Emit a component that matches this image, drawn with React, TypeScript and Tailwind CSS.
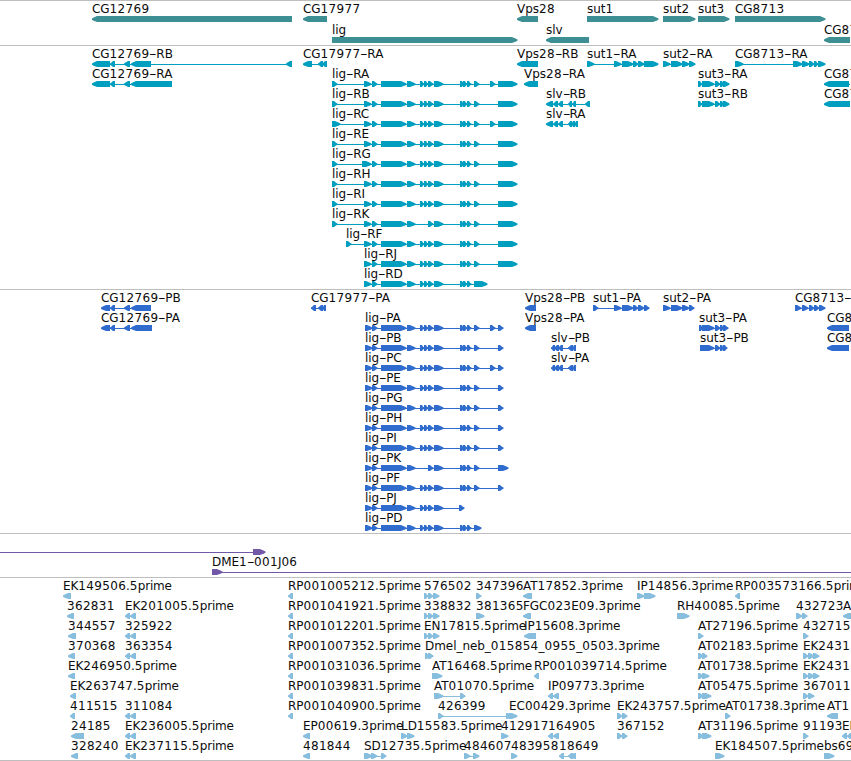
import React from "react";

type Dir = "R" | "L";
type Exon = [number, number];
interface Feature {
  name: string;
  dir: Dir;
  exons: Exon[];
  line?: Exon;
}
type Row = Feature[];

const f = (name: string, dir: Dir, ...exons: Exon[]): Feature => ({ name, dir, exons });

const genes: Row[] = [
  [
    f("CG12769", "L", [92, 292]),
    f("CG17977", "L", [303, 327]),
    f("Vps28", "L", [517, 538]),
    f("sut1", "R", [587, 658]),
    f("sut2", "R", [663, 695]),
    f("sut3", "R", [698, 729]),
    f("CG8713", "R", [735, 825]),
  ],
  [
    f("lig", "R", [332, 517]),
    f("slv", "L", [546, 589]),
    f("CG87", "L", [824, 850]),
  ],
];

const head: Exon[] = [[364, 371], [372, 377], [381, 406], [407, 415]];
const trio: Exon[] = [[420, 424], [424, 428], [428, 433]];
const mid: Exon[] = [[434, 443], [460, 464], [463, 467], [467, 471]];
const end: Exon = [498, 517];
const ligR = (name: string, ...first: Exon[]) =>
  f(name, "R", ...first, ...head, ...trio, ...mid, [474, 479], end);
const slvStart: Exon[] = [[546, 553], [553, 558], [558, 563], [568, 572]];
const sut3: Exon[] = [[698, 702], [702, 714], [715, 720], [720, 724], [723, 729]];

const transcripts: Row[] = [
  [
    f("CG12769-RB", "L", [92, 110], [110, 115], [124, 130], [131, 151], [286, 292]),
    f("CG17977-RA", "L", [303, 312], [318, 323], [322, 327]),
    f("Vps28-RB", "L", [517, 538]),
    f("sut1-RA", "R", [587, 594], [614, 621], [622, 633], [633, 638], [638, 644], [644, 658]),
    f("sut2-RA", "R", [663, 670], [671, 682], [682, 689], [689, 695]),
    f("CG8713-RA", "R", [735, 743], [793, 802], [802, 809], [809, 814], [814, 818], [818, 825]),
  ],
  [
    f("CG12769-RA", "L", [92, 110], [110, 115], [124, 130], [131, 172]),
    f("lig-RA", "R", [332, 337], ...head, ...trio, ...mid, [474, 479], [490, 495], end),
    f("Vps28-RA", "L", [524, 538]),
    f("sut3-RA", "R", ...sut3),
    { name: "CG87", dir: "L", exons: [[824, 849]], line: [824, 850] },
  ],
  [
    ligR("lig-RB", [332, 337]),
    f("slv-RB", "L", ...slvStart, [572, 576], [585, 590]),
    f("sut3-RB", "R", ...sut3),
    f("CG87", "L", [824, 850]),
  ],
  [
    f("lig-RC", "R", [332, 340], ...head, ...trio, ...mid, [474, 479], [490, 495], end),
    f("slv-RA", "L", ...slvStart, [571, 575], [574, 578]),
  ],
  [ligR("lig-RE", [332, 337])],
  [ligR("lig-RG", [332, 337], [362, 367])],
  [ligR("lig-RH", [332, 337])],
  [ligR("lig-RI", [332, 337])],
  [f("lig-RK", "R", [332, 337], ...head, [428, 433], ...mid, [474, 479], end)],
  [ligR("lig-RF", [346, 351])],
  [ligR("lig-RJ")],
  [f("lig-RD", "R", ...head, ...trio, ...mid, [474, 487])],
];

const cdsHead: Exon[] = [[365, 372], [372, 377], [381, 406], [407, 415]];
const ligP = (name: string, ...tail: Exon[]) =>
  f(name, "R", ...cdsHead, ...trio, ...mid, ...tail);
const slvP: Exon[] = [[551, 555], [554, 559], [558, 563], [568, 573], [572, 576]];

const proteins: Row[] = [
  [
    f("CG12769-PB", "L", [101, 110], [110, 115], [124, 130], [131, 151]),
    f("CG17977-PA", "L", [311, 316], [318, 323], [322, 326]),
    f("Vps28-PB", "L", [525, 536]),
    f("sut1-PA", "R", [593, 598], [614, 621], [622, 633], [633, 638], [638, 644], [644, 649]),
    f("sut2-PA", "R", [663, 670], [671, 682], [682, 689], [689, 694]),
    f("CG8713-", "R", [795, 801], [802, 808], [809, 814], [814, 819], [819, 825]),
  ],
  [
    f("CG12769-PA", "L", [101, 110], [110, 115], [124, 130], [131, 152]),
    ligP("lig-PA", [474, 479], [490, 495], [498, 503]),
    f("Vps28-PA", "L", [525, 536]),
    f("sut3-PA", "R", [699, 703], [702, 714], [715, 720], [720, 724], [723, 728]),
    f("CG8", "L", [827, 849]),
  ],
  [
    ligP("lig-PB", [474, 479], [498, 503]),
    f("slv-PB", "L", ...slvP),
    f("sut3-PB", "R", [700, 703], [702, 714], [715, 720], [720, 724], [723, 727]),
    f("CG8", "L", [827, 849]),
  ],
  [ligP("lig-PC", [474, 479], [490, 495], [498, 503]), f("slv-PA", "L", ...slvP)],
  [ligP("lig-PE", [474, 479], [498, 503])],
  [ligP("lig-PG", [474, 479], [498, 503])],
  [ligP("lig-PH", [474, 479], [498, 503])],
  [ligP("lig-PI", [474, 479], [498, 503])],
  [f("lig-PK", "R", ...cdsHead, [428, 433], ...mid, [474, 479], [498, 508])],
  [ligP("lig-PF", [474, 479], [498, 503])],
  [f("lig-PJ", "R", ...cdsHead, ...trio, [434, 443], [459, 464])],
  [ligP("lig-PD", [474, 481])],
];

const bacs: Row[] = [
  [{ name: "", dir: "R", exons: [[253, 265]], line: [0, 265] }],
  [{ name: "DME1-001J06", dir: "R", exons: [[212, 222]], line: [212, 851] }],
];

const pair: Exon[] = [[125, 130], [130, 136]];
const rp: Exon = [288, 293];
const triple: Exon[] = [[424, 428], [428, 433], [433, 439]];
const ek: Exon[] = [[803, 808], [808, 814], [813, 819]];

const ests: Row[] = [
  [
    f("EK149506.5prime", "L", [63, 71]),
    f("RP001005212.5prime", "L", rp),
    f("576502", "R", ...triple),
    f("347396", "R", [476, 481]),
    f("AT17852.3prime", "L", [523, 532]),
    f("IP14856.3prime", "R", [637, 644], [644, 655]),
    f("RP003573166.5prime", "L", [735, 740]),
  ],
  [
    f("362831", "L", [67, 74]),
    f("EK201005.5prime", "L", ...pair),
    f("RP001041921.5prime", "L", rp),
    f("338832", "R", ...triple),
    f("381365", "R", [476, 484]),
    f("FGC023E09.3prime", "L", [523, 531]),
    f("RH40085.5prime", "R", [677, 689]),
    f("432723", "R", [796, 802], [802, 807]),
    f("A", "L", [843, 852]),
  ],
  [
    f("344557", "L", [68, 76]),
    f("325922", "L", ...pair),
    f("RP001012201.5prime", "L", rp),
    f("EN17815.5prime", "R", ...triple),
    f("IP15608.3prime", "L", [524, 536]),
    f("AT27196.5prime", "R", [698, 703]),
    f("432715", "R", [803, 808]),
  ],
  [
    f("370368", "L", [68, 75]),
    f("363354", "L", ...pair),
    f("RP001007352.5prime", "L", rp),
    f("Dmel_neb_015854_0955_0503.3prime", "R", [425, 429], [428, 433]),
    f("AT02183.5prime", "R", [698, 703], [702, 707]),
    f("EK2431", "R", ...ek),
  ],
  [
    f("EK246950.5prime", "L", [68, 75]),
    f("RP001031036.5prime", "L", rp),
    f("AT16468.5prime", "R", [432, 442]),
    f("RP001039714.5prime", "L", [534, 539]),
    f("AT01738.5prime", "R", [698, 703], [702, 709]),
    f("EK2431", "R", ...ek),
  ],
  [
    f("EK263747.5prime", "L", [70, 76]),
    f("RP001039831.5prime", "L", rp),
    f("AT01070.5prime", "R", [434, 443], [460, 465]),
    f("IP09773.3prime", "L", [548, 553], [553, 559]),
    f("AT05475.5prime", "R", [698, 703], [702, 711]),
    f("367011", "R", [803, 808], [808, 814]),
  ],
  [
    f("411515", "L", [70, 75]),
    f("311084", "L", ...pair),
    f("RP001040900.5prime", "L", rp),
    f("426399", "R", [438, 443], [506, 511]),
    f("EC00429.3prime", "R", [509, 517]),
    f("EK243757.5prime", "R", [617, 622], [622, 627]),
    f("AT01738.3prime", "R", [725, 730]),
    f("AT1", "L", [827, 838]),
  ],
  [
    f("24185", "L", [71, 84]),
    f("EK236005.5prime", "L", ...pair),
    f("EP00619.3prime", "L", [303, 310]),
    f("LD15583.5prime", "R", [401, 407], [407, 414]),
    f("412917", "R", [501, 508]),
    f("164905", "L", [548, 553], [553, 559]),
    f("367152", "R", [617, 622], [622, 627]),
    f("AT31196.5prime", "R", [698, 703], [702, 711]),
    f("91193", "R", [803, 808]),
    f("EK", "L", [842, 847], [847, 852]),
  ],
  [
    f("328240", "L", [71, 78]),
    f("EK237115.5prime", "L", ...pair),
    f("481844", "L", [303, 310]),
    f("SD12735.5prime", "R", [364, 372], [371, 377], [381, 386]),
    f("484607", "R", [464, 470], [473, 479]),
    f("483958", "R", [511, 517]),
    f("18649", "L", [559, 564], [568, 573], [571, 576]),
    f("EK184507.5prime", "R", [715, 724]),
    f("bs69", "R", [824, 834]),
  ],
];

// Exon outline: a full-height block that rounds off to a point on its leading side.
function exonPoints([a, b]: Exon, dir: Dir, x0: number) {
  const tip = Math.min(b - a - 2, 5);
  const s = a - x0;
  const e = b - x0;
  if (dir === "R") {
    return `${s},0 ${e - tip},0 ${e - 1},1.7 ${e + 0.5},2.5 ${e + 0.5},3.8 ${e - 1},4.5 ${e - tip},6 ${s},6`;
  }
  return `${e},0 ${s + tip},0 ${s + 1.2},1.7 ${s},2.5 ${s},3.8 ${s + 1.2},4.5 ${s + tip},6 ${e},6`;
}

// Digits are set on an 8px pitch and the hyphen is drawn wide.
function Label({ text }: { text: string }) {
  return (
    <span className="relative -top-px block whitespace-pre text-[12px] leading-[14px] text-[#0c0c0c]">
      {text.split(/(\d+|-|[a-z]{4,})/).filter(Boolean).map((run, i) => {
        if (run === "-") {
          return <span key={i} className="inline-block w-[7px] origin-left scale-x-175 leading-[12px]">-</span>;
        }
        if (/[a-z]{4}/.test(run)) {
          return <span key={i} className="tracking-[-0.2px]">{run}</span>;
        }
        return <span key={i} className={/\d/.test(run) ? "tracking-[0.32px]" : "tracking-[-0.05px]"}>{run}</span>;
      })}
    </span>
  );
}

function Glyph({ feature }: { feature: Feature }) {
  const first = feature.exons[0][0];
  const last = feature.exons[feature.exons.length - 1][1];
  const [a, b] = feature.line ?? [first, last];
  return (
    <div className="absolute top-0" style={{ left: a }}>
      {feature.name && <Label text={feature.name} />}
      <svg width={b - a} height="6" className="absolute left-0 top-[13px] overflow-visible fill-current">
        <rect x="0" y="3" width={b - a} height="1" />
        {feature.exons.map((e, i) => <polygon key={i} points={exonPoints(e, feature.dir, a)} />)}
      </svg>
    </div>
  );
}

function Track({ rows, color, tall = false }: { rows: Row[]; color: string; tall?: boolean }) {
  return (
    <section className={`border-t border-[#bebebe] pt-[2px] ${color}`}>
      {rows.map((row, i) => (
        <div key={i} className={`relative ${tall ? "h-[21px]" : "h-5"}`}>
          {row.map((feature, j) => <Glyph key={j} feature={feature} />)}
        </div>
      ))}
    </section>
  );
}

export default function App() {
  return (
    <main className="h-[761px] w-[851px] overflow-hidden border-b border-[#bebebe] bg-white font-['DejaVu_Sans',sans-serif]">
      <Track rows={genes} color="text-[#3e8f94]" tall />
      <div className="flex flex-col gap-px">
        <Track rows={transcripts} color="text-[#009ebf]" />
        <Track rows={proteins} color="text-[#306ccd]" />
        <Track rows={bacs} color="text-[#7259a8]" />
        <Track rows={ests} color="text-[#87bddd]" />
      </div>
    </main>
  );
}
